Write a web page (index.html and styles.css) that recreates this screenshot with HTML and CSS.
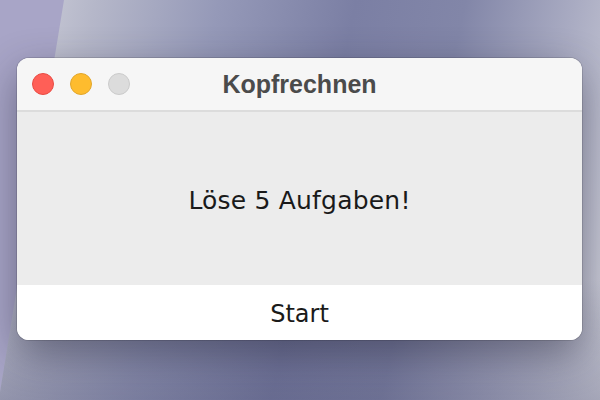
FILE: index.html
```html
<!DOCTYPE html>
<html>
<head>
  <title>Kopfrechnen</title>
  <link rel="stylesheet" href="styles.css">
</head>
<body>
  <div class="desktop">
    <div class="window">
      <div class="titlebar">
        <div class="lights">
          <span class="light close"></span>
          <span class="light minimize"></span>
          <span class="light zoom"></span>
        </div>
        <div class="title">Kopfrechnen</div>
      </div>
      <div class="content">
        <p class="label">Löse 5 Aufgaben!</p>
      </div>
      <button class="start">Start</button>
    </div>
  </div>
</body>
</html>
```

FILE: styles.css
```css
body {
  margin: 0;
}

/* Wallpaper behind the window */
.desktop {
  position: relative;
  width: 600px;
  height: 400px;
  overflow: hidden;
  background: #a8a5c7;
  padding: 58px 0 0 17px;
  box-sizing: border-box;
}

.desktop::before {
  content: "";
  position: absolute;
  inset: 0;
  clip-path: polygon(64px 0, 100% 0, 100% 100%, 0 100%, 0 392px);
  background:
    linear-gradient(180deg, rgba(60, 62, 100, 0) 70%, rgba(60, 62, 100, 0.3) 100%),
    linear-gradient(102deg, #d2d3dc 0%, #b5b7c9 14%, #9599b8 32%, #7b7fa4 52%, #8286a8 68%, #a9abc2 84%, #d2d3dc 100%);
}

.window {
  position: relative;
  width: 565px;
  height: 282px;
  border-radius: 12px;
  overflow: hidden;
  display: flex;
  flex-direction: column;
  background: #fff;
  box-shadow: 0 0 0 1px rgba(0, 0, 0, 0.12), 0 14px 40px rgba(30, 30, 50, 0.45);
}

.titlebar {
  height: 52px;
  flex: none;
  background: #f6f6f6;
  border-bottom: 2px solid #dcdcdc;
  display: grid;
  grid-template-columns: 1fr;
  align-items: center;
}

.lights,
.title {
  grid-row: 1;
  grid-column: 1;
}

.lights {
  display: flex;
  gap: 16px;
  padding-left: 15px;
}

.light {
  width: 22px;
  height: 22px;
  border-radius: 50%;
  box-sizing: border-box;
}

.close {
  background: #ff5f57;
  border: 1px solid #e94b43;
}

.minimize {
  background: #febc2e;
  border: 1px solid #e2a62a;
}

.zoom {
  background: #dcdcdc;
  border: 1px solid #cbcbcb;
}

.title {
  text-align: center;
  font-family: "Liberation Sans", Arial, sans-serif;
  font-weight: bold;
  font-size: 25px;
  color: #4b4b4b;
}

.content {
  flex: 1;
  background: #ececec;
  display: flex;
  align-items: center;
  justify-content: center;
}

.label {
  margin: 0 0 0 0;
  padding-top: 3px;
  font-family: "DejaVu Sans", sans-serif;
  font-size: 25px;
  letter-spacing: 0.2px;
  color: #1a1a1a;
}

.start {
  height: 55px;
  flex: none;
  border: none;
  background: #fff;
  font-family: "DejaVu Sans", sans-serif;
  font-size: 24px;
  color: #1a1a1a;
  padding: 2px 0 0 0;
}
```
